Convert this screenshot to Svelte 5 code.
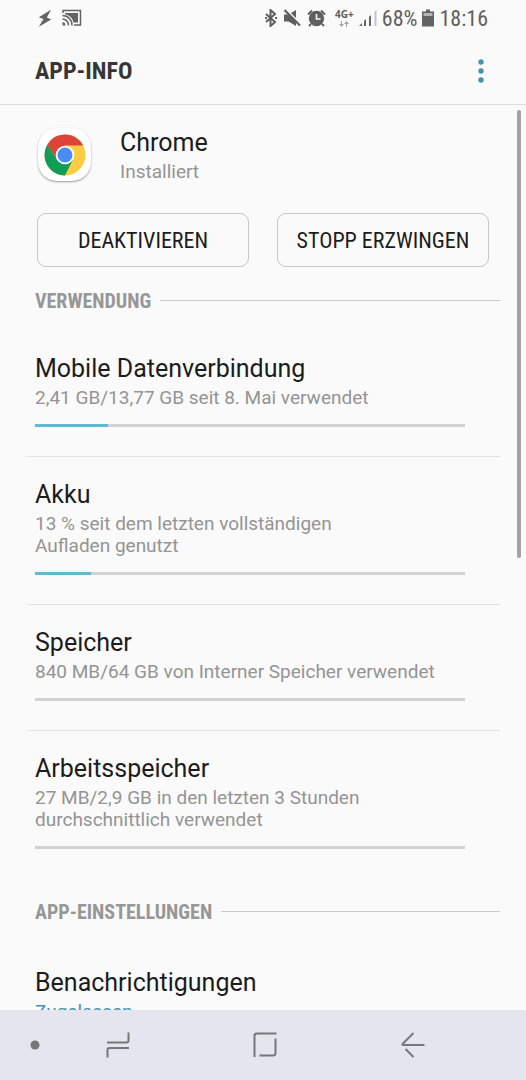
<script lang="ts">
  type UsageItem = {
    id: string;
    title: string;
    summary: string;
    percent: number;
  };

  const usage: UsageItem[] = [
    { id: 'data', title: 'Mobile Datenverbindung', summary: '2,41 GB/13,77 GB seit 8. Mai verwendet', percent: 17 },
    { id: 'battery', title: 'Akku', summary: '13 % seit dem letzten vollständigen\nAufladen genutzt', percent: 13 },
    { id: 'storage', title: 'Speicher', summary: '840 MB/64 GB von Interner Speicher verwendet', percent: 0 },
    { id: 'memory', title: 'Arbeitsspeicher', summary: '27 MB/2,9 GB in den letzten 3 Stunden\ndurchschnittlich verwendet', percent: 0 },
  ];
</script>

<div class="screen">
  <div class="status-bar">
    <div class="status-left">
      <svg width="14" height="18" viewBox="0 0 14 18" fill="#636363">
        <path d="M13 .8.8 8.200 5.500 10 .8 17.800 13.300 10.500 8.800 8.500z" />
      </svg>
      <svg width="20" height="18" viewBox="0 0 20 18" fill="none" stroke="#636363" stroke-width="1.500">
        <path d="M1 4V1.500h17.500v14.500H12" />
        <path d="M3 4h13v9.500h-4.500C10.500 9 8 6.500 3 5.200z" fill="#636363" stroke="none" />
        <path d="M.5 6.500A9.500 9.500 0 0 1 10 16.500M.5 10a6 6 0 0 1 6 6.500" />
        <path d="M.5 13v3.500h3A3.500 3.500 0 0 0 .5 13z" fill="#636363" stroke="none" />
      </svg>
    </div>
    <div class="status-right">
      <svg width="14" height="18" viewBox="0 0 14 18" fill="none" stroke="#5f5f5f" stroke-width="2">
        <path d="M2 5l9 8-4.500 4V1L11 5l-9 8" />
        <path d="M1 9h2M11 9h2" />
      </svg>
      <svg width="19" height="18" viewBox="0 0 19 18" fill="#5f5f5f">
        <path d="M1 5.500h4.500L13 1v16L5.500 12.500H1z" />
        <path d="M2.500 0 18 15.500" stroke="#fafafa" stroke-width="2" />
        <path d="M1.500 1 17 16.500" stroke="#5f5f5f" stroke-width="2.200" />
      </svg>
      <svg width="19" height="18" viewBox="0 0 19 18" fill="#5f5f5f">
        <circle cx="9.500" cy="9.500" r="7.700" />
        <path d="M1 5.500 5 1.500M18 5.500l-4-4M4 15l-2 2M15 15l2 2" stroke="#5f5f5f" stroke-width="2" />
        <path d="M9.500 5v5h4" fill="none" stroke="#fafafa" stroke-width="1.600" />
      </svg>
      <div class="network">
        <span>4G+</span>
        <svg width="10" height="6" viewBox="0 0 10 6" fill="#a5a5a5">
          <path d="M2 0h1v3h2L2.500 6 0 3h2zM7 6h1V3h2L7.500 0 5 3h2z" />
        </svg>
      </div>
      <svg width="18" height="18" viewBox="0 0 18 18" fill="#666">
        <path d="M0 17h3v-3zM5 17h2v-7l-2 2zM10 17h2V6l-2 2z" />
        <path d="M15.500 17h2V1l-2 2z" fill="#c4c4c4" />
      </svg>
      <span>68%</span>
      <svg width="12" height="18" viewBox="0 0 12 18" fill="#636363">
        <path d="M0 2.500h4V.5h4v2h4V17.500H0z" />
        <path d="M1.500 4h9v3h-9z" fill="#b5b5b5" />
      </svg>
      <span>18:16</span>
    </div>
  </div>

  <header>
    <h1>APP-INFO</h1>
    <button class="more" aria-label="Weitere Optionen">
      <svg width="6" height="24" viewBox="0 0 6 24" fill="#4594ad">
        <circle cx="3" cy="3" r="2.700" />
        <circle cx="3" cy="12" r="2.700" />
        <circle cx="3" cy="21" r="2.700" />
      </svg>
    </button>
  </header>

  <main>
    <div class="app">
      <div class="app-icon">
        <svg width="42" height="42" viewBox="-21 -21 42 42">
          <circle r="20.500" fill="#fdcc42" />
          <path d="M-17.750 -10.250A20.500 20.500 0 0 0 0 20.500L8 4.600-8 4.600z" fill="#109d58" />
          <path d="M-17.750 -10.250A20.500 20.500 0 0 1 18.200 -9.400H0L-8 4.600z" fill="#db4437" />
          <circle r="9.300" fill="#fff" />
          <circle r="7.500" fill="#4b8bf5" />
        </svg>
      </div>
      <div>
        <h2>Chrome</h2>
        <p>Installiert</p>
      </div>
    </div>

    <div class="actions">
      <button>DEAKTIVIEREN</button>
      <button>STOPP ERZWINGEN</button>
    </div>

    <section>
      <h3>VERWENDUNG</h3>
      {#each usage as item (item.id)}
        <a class="item" href="#{item.id}">
          <span class="title">{item.title}</span>
          <span class="summary">{item.summary}</span>
          <span class="track">
            <span class="fill" style="width: {item.percent}%"></span>
          </span>
        </a>
      {/each}
    </section>

    <section>
      <h3>APP-EINSTELLUNGEN</h3>
      <a class="item setting" href="#notifications">
        <span class="title">Benachrichtigungen</span>
        <span class="summary">Zugelassen</span>
      </a>
    </section>

    <div class="scrollbar"></div>
  </main>

  <nav>
    <button aria-label="Navigationsleiste ausblenden">
      <svg width="10" height="10" viewBox="0 0 10 10"><circle cx="5" cy="5" r="4.500" fill="#777" /></svg>
    </button>
    <button aria-label="Letzte Apps">
      <svg width="24" height="26" viewBox="0 0 24 26">
        <path d="M1 10.500h19.500q2 0 2-2V.5M1.500 25.500v-7.500q0-2 2-2H23" />
      </svg>
    </button>
    <button aria-label="Startseite">
      <svg width="24" height="26" viewBox="0 0 24 26">
        <path d="M1.500 25V4q0-2.500 2.500-2.500H23.500M22.500 6.500V21q0 2.500-2.500 2.500H6.500" />
      </svg>
    </button>
    <button aria-label="Zurück">
      <svg width="24" height="26" viewBox="0 0 24 26">
        <path d="M12.500 1 2 11.500q-1.500 1.500.5 1.500H23.500M4.500 17l8 8" />
      </svg>
    </button>
  </nav>
</div>

<style>
  :global(body) {
    margin: 0;
    background: #fafafa;
  }

  .screen {
    display: flex;
    flex-direction: column;
    height: 100vh;
    overflow: hidden;
    background: #fafafa;
    color: #1c1c1c;
    font-family: Roboto, sans-serif;
  }

  h1, h2, h3, p {
    margin: 0;
  }

  button {
    padding: 0;
    border: 0;
    background: none;
    color: inherit;
    cursor: pointer;
  }

  svg {
    display: block;
    flex: none;
  }

  .status-bar,
  h1, h3,
  .actions button {
    font-family: "Roboto Condensed", Roboto, sans-serif;
  }

  /* Statusleiste */
  .status-bar {
    display: flex;
    flex: none;
    align-items: center;
    justify-content: space-between;
    height: 36px;
    padding: 0 38px 2px;
    color: #606060;
    font-size: 22px;
  }

  .status-left,
  .status-right {
    display: flex;
    align-items: center;
  }

  .status-left {
    gap: 10px;
  }

  .status-right {
    gap: 5px;
  }

  .network {
    display: flex;
    flex-direction: column;
    align-items: center;
    gap: 2px;
    margin-left: 4px;
    font-family: "Open Sans", sans-serif;
    font-size: 10px;
    font-weight: 700;
    line-height: 10px;
  }

  /* Kopfzeile */
  header {
    display: flex;
    flex: none;
    align-items: center;
    justify-content: space-between;
    height: 66px;
    padding: 0 36px 0 35px;
    border-bottom: 1px solid #dedede;
  }

  h1 {
    color: #363636;
    font-size: 24px;
    font-weight: 700;
  }

  .more {
    padding: 6px;
  }

  main {
    position: relative;
    flex: 1;
    min-height: 0;
    overflow: hidden;
  }

  .app {
    display: flex;
    align-items: flex-start;
    gap: 29px;
    padding: 23px 38px 0;
  }

  .app-icon {
    display: grid;
    place-items: center;
    width: 53px;
    height: 53px;
    border-radius: 19px;
    background: #fff;
    box-shadow: 0 1px 2px #999;
  }

  h2,
  .title {
    font-size: 25px;
    font-weight: 400;
    line-height: 30px;
  }

  p,
  .summary {
    margin-top: 3px;
    color: #949494;
    font-size: 19px;
    line-height: 22px;
  }

  .actions {
    display: grid;
    grid-template-columns: 1fr 1fr;
    gap: 28px;
    padding: 30px 37px 0;
  }

  .actions button {
    height: 54px;
    border: 1px solid #c6c6c6;
    border-radius: 9px;
    font-size: 22px;
  }

  section {
    padding: 0 26px 0 27px;
  }

  h3 {
    display: flex;
    align-items: center;
    gap: 9px;
    height: 61px;
    padding: 3px 0 0 8px;
    color: #979797;
    font-size: 20px;
    font-weight: 700;
  }

  h3::after {
    content: "";
    flex: 1;
    height: 1px;
    background: #c9c9c9;
  }

  .item {
    display: flex;
    flex-direction: column;
    padding: 23px 35px 29px 8px;
    color: inherit;
    text-decoration: none;
  }

  .item + .item {
    border-top: 1px solid #e2e2e2;
  }

  .summary {
    white-space: pre-line;
  }

  .track {
    height: 3px;
    margin-top: 15px;
    background: #d2d2d2;
  }

  .fill {
    display: block;
    height: 100%;
    background: #5fb9cf;
  }

  .setting {
    padding-top: 26px;
  }

  .setting .summary {
    color: #4594ad;
  }

  .scrollbar {
    position: absolute;
    top: 5px;
    right: 5px;
    width: 4px;
    height: 448px;
    border-radius: 2px;
    background: #a3a3a3;
  }

  /* Navigationsleiste */
  nav {
    display: grid;
    flex: none;
    grid-template-columns: 18px repeat(3, 1fr);
    height: 70px;
    padding: 0 39px 0 26px;
    background: #e5e5f0;
  }

  nav button {
    display: grid;
    place-items: center;
  }

  nav path {
    fill: none;
    stroke: #777;
    stroke-width: 2;
  }
</style>
